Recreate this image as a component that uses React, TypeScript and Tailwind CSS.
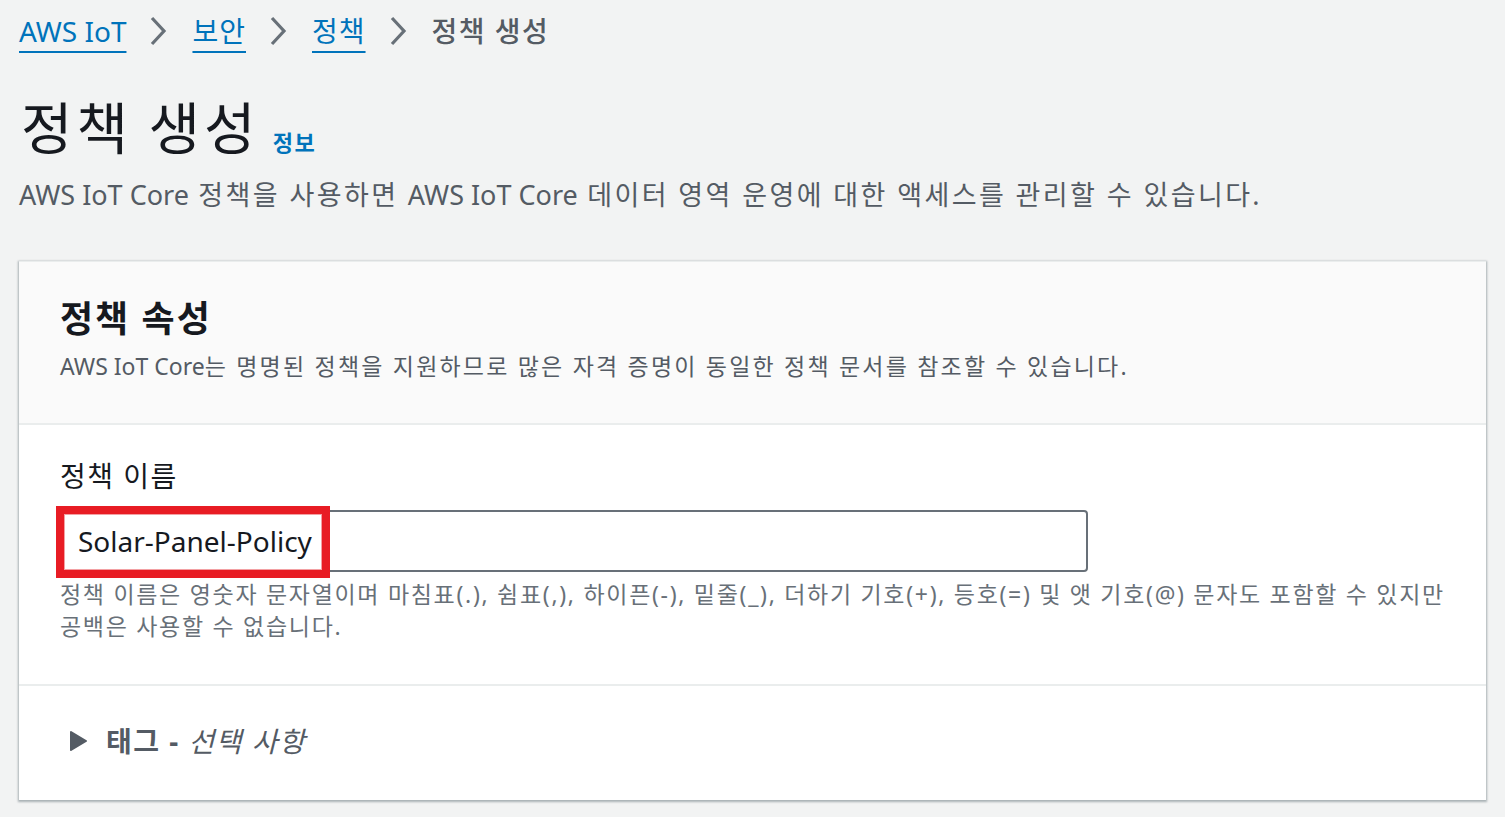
import React from "react";

const font = { fontFamily: '"Noto Sans", "Noto Sans CJK KR", sans-serif' };

const Chevron = () => (
  <svg width="20" height="32" viewBox="0 0 20 32" className="shrink-0">
    <path d="M3 3 L15 16 L3 29" fill="none" stroke="#687078" strokeWidth="3.2" />
  </svg>
);

const Crumb = ({ children }: { children: React.ReactNode }) => (
  <a className="text-[#0073bb] underline decoration-2 underline-offset-[9px] cursor-pointer">{children}</a>
);

// latin runs keep normal spacing, the korean around them is spaced a little wider
const Latin = ({ children }: { children: React.ReactNode }) => (
  <span className="tracking-normal">{children}</span>
);

export default function App() {
  return (
    <div className="min-h-screen bg-[#f2f3f3] px-[19px] pt-[11px] text-[#16191f]" style={font}>
      <nav className="flex items-center gap-[23px] text-[28px] leading-[40px]">
        <Crumb>AWS IoT</Crumb>
        <Chevron />
        <span className="tracking-[1px]"><Crumb>보안</Crumb></span>
        <Chevron />
        <span className="tracking-[1px]"><Crumb>정책</Crumb></span>
        <Chevron />
        <span className="text-[#545b64] font-medium tracking-[1.5px]">정책 생성</span>
      </nav>

      <div className="mt-[44px] flex items-end gap-[13px] pl-[2px]">
        <h1 className="text-[56px] leading-[64px] font-normal tracking-[4px] [word-spacing:-2px]">정책 생성</h1>
        <a className="text-[#0073bb] font-bold text-[22px] leading-[30px] pb-[2px] tracking-[1.5px]">정보</a>
      </div>
      <p className="mt-[16px] text-[27px] leading-[40px] text-[#545b64] tracking-[2.4px]">
        <Latin>AWS IoT Core</Latin> 정책을 사용하면 <Latin>AWS IoT Core</Latin> 데이터 영역 운영에 대한 액세스를 관리할 수 있습니다.
      </p>

      <section className="mt-[46px] bg-white shadow-[0_1px_2px_1px_rgba(0,28,36,0.3)] border-t border-[#eaeded]">
        <header className="bg-[#fafafa] px-[41px] pt-[33px] pb-[37px] border-b-2 border-[#eaeded]">
          <h2 className="text-[36px] leading-[48px] font-bold tracking-[2px]">정책 속성</h2>
          <p className="mt-[3px] text-[23px] leading-[40px] text-[#545b64] tracking-[2.2px]">
            <Latin>AWS IoT Core</Latin>는 명명된 정책을 지원하므로 많은 자격 증명이 동일한 정책 문서를 참조할 수 있습니다.
          </p>
        </header>

        <div className="px-[41px] pt-[31px] pb-[42px] border-b-2 border-[#eaeded]">
          <label className="block text-[28px] leading-[40px] tracking-[1.5px]">정책 이름</label>
          <div className="relative mt-[14px] w-[1028px] h-[62px] border-2 border-[#687078] rounded-[4px] bg-white flex items-center">
            <div className="absolute left-[-6px] top-[-6px] w-[274px] h-[72px] border-[8px] border-[#e81c24]">
              <div className="w-full h-full border border-[#f3a0a3]" />
            </div>
            <span className="relative pl-[16px] text-[28px] leading-[40px]">Solar-Panel-Policy</span>
          </div>
          <p className="mt-[6px] max-w-[1395px] text-[23px] leading-[32px] text-[#687078] tracking-[1.7px]">
            정책 이름은 영숫자 문자열이며 마침표(.), 쉼표(,), 하이픈(-), 밑줄(_), 더하기 기호(+), 등호(=) 및 앳 기호(@) 문자도 포함할 수 있지만 공백은 사용할 수 없습니다.
          </p>
        </div>

        <div className="px-[50px] pt-[35px] pb-[39px] flex items-center gap-[18px]">
          <svg width="19" height="22" viewBox="0 0 19 22">
            <path d="M2 2 L17 11 L2 20 Z" fill="#545b64" stroke="#545b64" strokeWidth="2" strokeLinejoin="round" />
          </svg>
          <span className="text-[28px] leading-[40px] text-[#545b64] tracking-[1.5px]">
            <span className="font-bold">태그 -</span> <i>선택 사항</i>
          </span>
        </div>
      </section>
    </div>
  );
}
